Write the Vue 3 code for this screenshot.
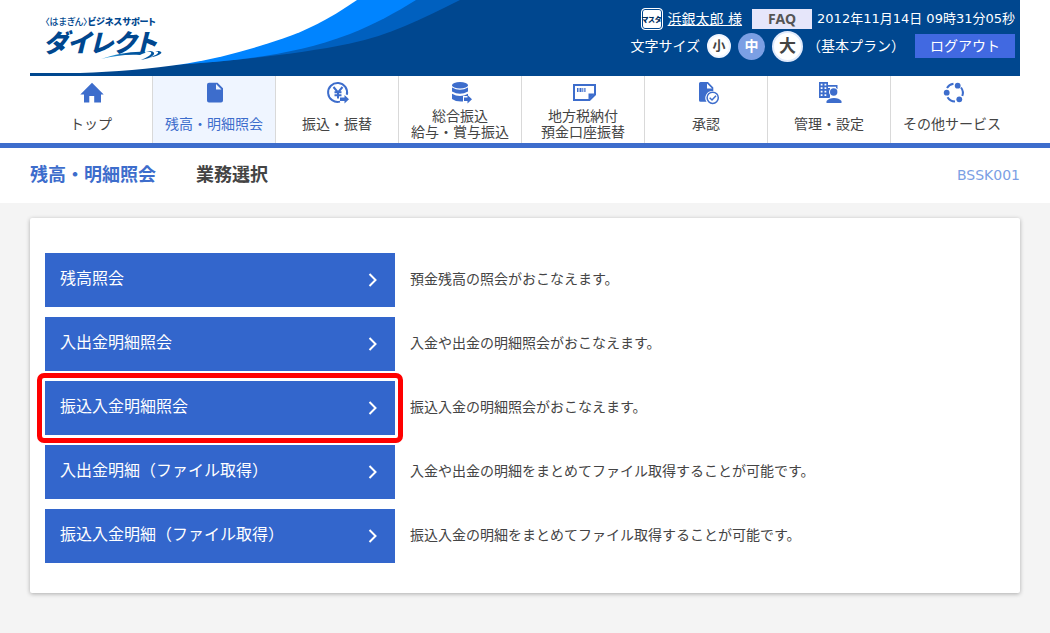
<script setup>
const navItems = [
  { icon: 'home', lines: ['トップ'] },
  { icon: 'file', lines: ['残高・明細照会'], active: true },
  { icon: 'yen', lines: ['振込・振替'] },
  { icon: 'database', lines: ['総合振込', '給与・賞与振込'] },
  { icon: 'slip', lines: ['地方税納付', '預金口座振替'] },
  { icon: 'approve', lines: ['承認'] },
  { icon: 'manage', lines: ['管理・設定'] },
  { icon: 'cycle', lines: ['その他サービス'] },
]

const services = [
  { name: '残高照会', text: '預金残高の照会がおこなえます。' },
  { name: '入出金明細照会', text: '入金や出金の明細照会がおこなえます。' },
  { name: '振込入金明細照会', text: '振込入金の明細照会がおこなえます。', marked: true },
  { name: '入出金明細（ファイル取得）', text: '入金や出金の明細をまとめてファイル取得することが可能です。' },
  { name: '振込入金明細（ファイル取得）', text: '振込入金の明細をまとめてファイル取得することが可能です。' },
]
</script>

<template>
  <div class="page">
    <header class="header">
      <svg class="wave" viewBox="0 0 440 76" aria-hidden="true">
        <path d="M0 0H440V76H0Z" fill="#00478f" />
        <path d="M0 0H430C390 20 360 35 320 43.500C270 54 210 60 157 64L0 73Z" fill="#0060bf" />
        <path d="M0 0H386C365 13 345 24 320 34C265 55 210 60 157 64L0 73Z" fill="#0084ff" />
        <path d="M0 0H327C298 20 275 31 253 38.500C222 49 190 58 157 63.500C118 69 85 72 50 73H0Z" fill="#fff" />
      </svg>
      <a class="logo" href="#">
        <span class="logo-sub"><span class="logo-light">〈はまぎん〉</span>ビジネスサポート</span>
        <span class="logo-main">ダイレクト</span>
        <svg class="logo-arrow" viewBox="0 0 62 12" aria-hidden="true">
          <defs>
            <linearGradient id="tail" x1="0" x2="1">
              <stop offset="0" stop-color="#3cb4f0" />
              <stop offset="0.6" stop-color="#00559f" />
            </linearGradient>
          </defs>
          <path d="M1 9C16 4 32 1 46 2L40 5C27 4 14 6 1 9Z" fill="url(#tail)" />
          <path d="M44 1C55 1 53 5 41 10C54 8 58 2 50 1Z" fill="#00559f" />
          <path d="M53 1C61 1 60 4 48 8C62 6 65 1 57 1Z" fill="#00559f" />
        </svg>
      </a>

      <div class="tools">
        <div class="tool-row">
          <span class="master">マスタ</span>
          <a class="user" href="#">浜銀太郎 様</a>
          <button class="faq" type="button">FAQ</button>
          <time class="time">2012年11月14日 09時31分05秒</time>
        </div>
        <div class="tool-row tool-row-second">
          <span class="size-label">文字サイズ</span>
          <button class="size small" type="button">小</button>
          <button class="size medium" type="button">中</button>
          <button class="size large" type="button">大</button>
          <span class="plan">（基本プラン）</span>
          <button class="logout" type="button">ログアウト</button>
        </div>
      </div>
    </header>

    <nav class="nav">
      <a v-for="item in navItems" :key="item.icon" href="#" class="nav-item" :class="{ active: item.active }">
        <svg class="nav-icon" viewBox="0 0 28 28" aria-hidden="true">
          <path v-if="item.icon === 'home'" d="M15 3.700L26.700 15.500H24V23.500H17.200V17H12.300V23.500H7V15.500H3.300Z" />
          <path v-else-if="item.icon === 'file'" fill-rule="evenodd" d="M9 3.700H17.500L23 9.200V21.500Q23 23.500 21 23.500H9Q7 23.500 7 21.500V5.700Q7 3.700 9 3.700ZM16 5V10.500H21.500Z" />
          <template v-else-if="item.icon === 'yen'">
            <path class="line" d="M17 22.600A9.500 9.500 0 1 1 23.800 15.800" />
            <path class="line" d="M10.500 8L15 13.500L19.500 8M15 13.500V19.500M11.500 13.200H18.500M11.500 16.300H18.500" />
            <path d="M17 18.500H21.500V16L26 20.200L21.500 24.400V22H17Z" />
          </template>
          <template v-else-if="item.icon === 'database'">
            <ellipse cx="14" cy="6.300" rx="8" ry="3.200" />
            <path d="M6 8.500Q14 13 22 8.500V12.500Q14 17.200 6 12.500Z" />
            <path d="M6 14.700Q14 19.200 22 14.700V17H17V22.500Q10 23 6 20Z" />
            <path d="M18 18.500H21.500V16L26 20.200L21.500 24.400V22H18Z" />
          </template>
          <template v-else-if="item.icon === 'slip'">
            <path class="line" d="M5 6H26V15.500L20.500 21H5Z" />
            <path d="M19.500 14.500H26L19.500 21Z" />
            <path d="M8 9H9.500V13H8ZM10.500 9H12.500V13H10.500ZM13.300 9H14.300V13H13.300ZM15.300 9H16.500V13H15.300Z" />
          </template>
          <template v-else-if="item.icon === 'approve'">
            <path fill-rule="evenodd" d="M8.500 3H16L21.300 8.500V12A7 7 0 0 0 14.500 22.800H8.500Q7 22.800 7 21.300V4.500Q7 3 8.500 3ZM15 4.500V9.500H20Z" />
            <circle class="line thin" cx="20.700" cy="18.800" r="5.600" />
            <path class="line thin" d="M17.700 18.800L20 21L24 16.700" />
          </template>
          <template v-else-if="item.icon === 'manage'">
            <path fill-rule="evenodd" d="M4 3H13V6H22.500V10H21V7.700H13V9H15V19H4ZM5.700 4.700V6.500H7.500V4.700ZM9.500 4.700V6.500H11.300V4.700ZM5.700 8.200V10H7.500V8.200ZM9.500 8.200V10H11.300V8.200ZM5.700 11.700V13.500H7.500V11.700ZM9.500 11.700V13.500H11.300V11.700ZM5.700 15.200V17H7.500V15.200ZM9.500 15.200V17H11.300V15.200Z" />
            <circle cx="18.700" cy="13" r="4.700" fill="#fff" />
            <circle cx="18.700" cy="13" r="3.700" />
            <path d="M10.800 25V21Q19 14.500 27.200 21V25Z" fill="#fff" />
            <path d="M11.500 24V22Q14 19 19 19Q24 19 26.500 22V24Z" />
          </template>
          <template v-else>
            <circle cx="19.700" cy="6.700" r="2.900" />
            <circle cx="8.700" cy="13.700" r="2.900" />
            <circle cx="21.300" cy="20.300" r="2.900" />
            <path class="line" d="M9 9Q11 5.500 15.500 4.800M23 8.500Q26 12.500 24.300 17M9.500 18.200Q12 22.300 17 22.500" />
          </template>
        </svg>
        <span class="nav-label"><span v-for="line in item.lines" :key="line">{{ line }}</span></span>
      </a>
    </nav>

    <div class="title-bar">
      <h1 class="category">残高・明細照会</h1>
      <h2 class="subtitle">業務選択</h2>
      <span class="screen-id">BSSK001</span>
    </div>

    <main class="card">
      <div v-for="service in services" :key="service.name" class="service">
        <button class="service-button" :class="{ marked: service.marked }" type="button">
          <span class="service-name">{{ service.name }}</span>
          <svg class="chevron" viewBox="0 0 10 14" aria-hidden="true"><path d="M1.500 1L7.500 7L1.500 13" /></svg>
        </button>
        <p class="service-text">{{ service.text }}</p>
      </div>
    </main>
  </div>
</template>

<style>
body {
  margin: 0;
  background: #f4f4f4;
}
</style>

<style scoped>
.page {
  font-family: "DejaVu Sans", "Noto Sans CJK JP", sans-serif;
  font-size: 14px;
  line-height: 20px;
  color: #444;
}
button {
  border: 0;
  padding: 0;
  font: inherit;
  cursor: pointer;
}
.header {
  position: relative;
  display: flex;
  justify-content: space-between;
  height: 76px;
  padding: 0 30px;
  background: linear-gradient(#00478f, #00478f) content-box, #fff;
}
.wave {
  position: absolute;
  top: 0;
  left: 30px;
  width: 440px;
  height: 76px;
}
.logo {
  position: relative;
  display: flex;
  flex-direction: column;
  padding: 16px 0 0 13px;
  color: #00478f;
  text-decoration: none;
  font-family: "Noto Sans CJK JP", sans-serif;
  font-weight: 900;
  font-feature-settings: "palt";
  white-space: nowrap;
}
.logo-sub {
  padding-left: 2px;
  font-size: 9px;
  line-height: 12px;
}
.logo-light {
  font-weight: 500;
}
.logo-main {
  font-size: 25px;
  font-style: italic;
  line-height: 26px;
}
.logo-arrow {
  position: absolute;
  top: 50px;
  left: 70px;
  width: 62px;
  height: 12px;
}
.tools {
  position: relative;
  display: flex;
  flex-direction: column;
  padding: 9px 5px 0 0;
  color: #fff;
}
.tool-row {
  display: flex;
  align-items: center;
  justify-content: flex-end;
  height: 20px;
  white-space: nowrap;
}
.tool-row-second {
  height: 34px;
}
.master {
  box-sizing: border-box;
  width: 22px;
  height: 22px;
  margin-right: 5px;
  border: 1px solid #fff;
  border-radius: 4px;
  background: #fff;
  box-shadow: inset 0 0 0 1px #00478f;
  color: #00305f;
  font-family: "Noto Sans CJK JP", sans-serif;
  font-size: 7px;
  font-weight: 900;
  font-feature-settings: "palt";
  line-height: 20px;
  text-align: center;
}
.user {
  margin-right: 10px;
  color: #fff;
}
.faq {
  width: 60px;
  height: 20px;
  margin-right: 5px;
  background: #e6e6fa;
  color: #555;
  font-family: "Noto Sans", sans-serif;
  font-weight: 700;
}
.time {
  font-size: 13px;
}
.size-label {
  margin-right: 7px;
}
.size {
  box-sizing: border-box;
  flex: none;
  border-radius: 50%;
  background: #fff;
  color: #444;
  font-weight: 700;
}
.small {
  width: 24px;
  height: 24px;
  margin-right: 7px;
  border: 2px solid #eff5ff;
  font-size: 13px;
}
.medium {
  width: 27px;
  height: 27px;
  margin-right: 7px;
  background: #7b9fe4;
  color: #fff;
}
.large {
  width: 31px;
  height: 31px;
  margin-right: 4px;
  border: 2px solid #e0eafc;
  font-size: 17px;
}
.plan {
  margin-right: 10px;
}
.logout {
  width: 100px;
  height: 24px;
  background: #4169e1;
  color: #fff;
}
.nav {
  display: flex;
  padding: 0 30px;
  background: #fff;
  border-bottom: 5px solid #3d6dcc;
}
.nav-item {
  box-sizing: border-box;
  flex: 0 1 123px;
  display: flex;
  flex-direction: column;
  align-items: center;
  height: 67px;
  padding-top: 3px;
  border-right: 1px solid #d9d9d9;
  color: #444;
  line-height: 16px;
  text-decoration: none;
  white-space: nowrap;
}
.nav-item:last-child {
  border-right-color: transparent;
}
.nav-item.active {
  background: #eff5ff;
  color: #3d6dcc;
}
.nav-icon {
  width: 28px;
  height: 28px;
  fill: #3d6dcc;
}
.line {
  fill: none;
  stroke: #3d6dcc;
  stroke-width: 2;
}
.thin {
  stroke-width: 1.5;
}
.nav-label {
  display: flex;
  flex-direction: column;
  align-items: center;
  justify-content: center;
  min-height: 34px;
}
.title-bar {
  box-sizing: border-box;
  display: flex;
  align-items: center;
  height: 55px;
  padding: 0 30px 2px;
  background: #fff;
}
.category,
.subtitle {
  margin: 0 40px 0 0;
  font-size: 18px;
  line-height: 24px;
}
.category {
  color: #3d6dcc;
}
.screen-id {
  margin-left: auto;
  color: #7b9fe4;
}
.card {
  display: flex;
  flex-direction: column;
  gap: 10px;
  margin: 15px 30px 40px;
  padding: 35px 15px 30px;
  border-radius: 2px;
  background: #fff;
  box-shadow: 0 1px 4px rgba(0, 0, 0, 0.3);
}
.service {
  display: flex;
  align-items: center;
  gap: 15px;
}
.service-button {
  position: relative;
  flex: 0 0 350px;
  display: flex;
  align-items: center;
  justify-content: space-between;
  height: 54px;
  padding: 0 17px 0 15px;
  background: #36c;
  color: #fff;
  font-size: 16px;
}
.service-name {
  padding-bottom: 2px;
}
.marked::after {
  content: "";
  position: absolute;
  inset: -8px;
  border: 5px solid #f00;
  border-radius: 7px;
}
.chevron {
  width: 10px;
  height: 14px;
  fill: none;
  stroke: #fff;
  stroke-width: 2;
}
.service-text {
  margin: 0;
  padding-bottom: 2px;
}
</style>
